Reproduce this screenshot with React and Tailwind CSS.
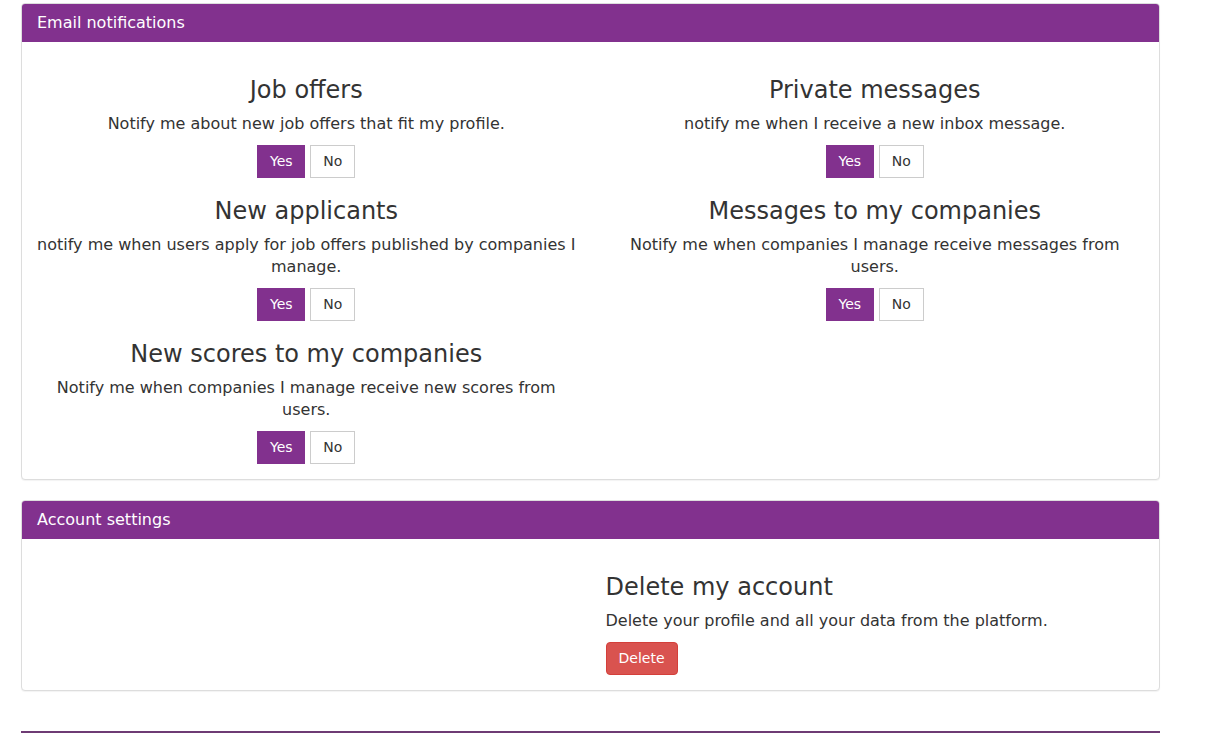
import { useState } from "react";

const font = { fontFamily: '"DejaVu Sans", "Open Sans", sans-serif' };

function YesNo({ initial = true }) {
    const [on, setOn] = useState(initial);
    return (
        <div className="flex justify-center gap-[5px]">
            <button
                onClick={() => setOn(true)}
                className={
                    on
                        ? "h-[33px] w-[48px] border border-[#82318e] bg-[#82318e] text-[14px] text-white"
                        : "h-[33px] w-[48px] border border-[#ccc] bg-white text-[14px] text-[#333]"
                }
            >
                Yes
            </button>
            <button
                onClick={() => setOn(false)}
                className={
                    !on
                        ? "h-[33px] w-[45px] border border-[#82318e] bg-[#82318e] text-[14px] text-white"
                        : "h-[33px] w-[45px] border border-[#ccc] bg-white text-[14px] text-[#333]"
                }
            >
                No
            </button>
        </div>
    );
}

function Option({ title, text }) {
    return (
        <div className="text-center">
            <h3 className="mt-[20px] mb-[10px] h-[26px] text-[24px] leading-[26px] text-[#333]">
                {title}
            </h3>
            <p className="mb-[10px] text-[16px] leading-[22px] text-[#333]">{text}</p>
            <YesNo />
        </div>
    );
}

function Panel({ title, children }) {
    return (
        <div className="overflow-hidden rounded-[4px] border border-[#ddd] bg-white shadow-[0_1px_1px_rgba(0,0,0,0.05)]">
            <div className="flex h-[38px] items-center bg-[#82318e] px-[15px] text-[16px] text-white">
                {title}
            </div>
            <div className="p-[15px]">{children}</div>
        </div>
    );
}

export default function App() {
    return (
        <div className="min-h-[754px] bg-white pt-[3px]" style={font}>
            <div className="ml-[21px] w-[1139px]">
                <Panel title="Email notifications">
                    <div className="-mx-[15px] grid grid-cols-2">
                        <div className="px-[15px]">
                            <Option
                                title="Job offers"
                                text="Notify me about new job offers that fit my profile."
                            />
                            <Option
                                title="New applicants"
                                text="notify me when users apply for job offers published by companies I manage."
                            />
                            <Option
                                title="New scores to my companies"
                                text="Notify me when companies I manage receive new scores from users."
                            />
                        </div>
                        <div className="px-[15px]">
                            <Option
                                title="Private messages"
                                text="notify me when I receive a new inbox message."
                            />
                            <Option
                                title="Messages to my companies"
                                text="Notify me when companies I manage receive messages from users."
                            />
                        </div>
                    </div>
                </Panel>

                <div className="mt-[20px]">
                    <Panel title="Account settings">
                        <div className="-mx-[15px] grid grid-cols-2">
                            <div className="px-[15px]"></div>
                            <div className="px-[15px]">
                                <h3 className="mt-[20px] mb-[10px] h-[26px] text-[24px] leading-[26px] text-[#333]">
                                    Delete my account
                                </h3>
                                <p className="mb-[10px] text-[16px] leading-[22px] text-[#333]">
                                    Delete your profile and all your data from the platform.
                                </p>
                                <button className="h-[33px] w-[72px] rounded-[4px] border border-[#d43f3a] bg-[#d9534f] text-[14px] text-white">
                                    Delete
                                </button>
                            </div>
                        </div>
                    </Panel>
                </div>

                <hr className="mt-[40px] border-0 border-t-2 border-[#6e3b74]" />
            </div>
        </div>
    );
}
